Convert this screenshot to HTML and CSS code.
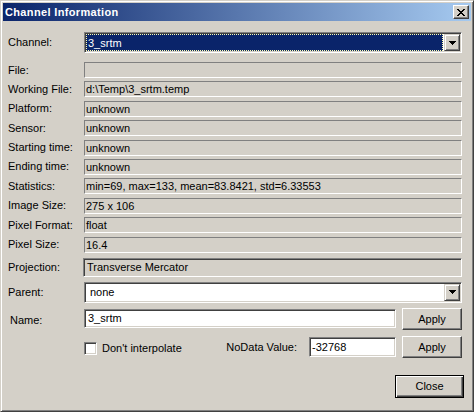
FILE: index.html
```html
<!DOCTYPE html>
<html>
<head>
<meta charset="utf-8">
<title>Channel Information</title>
<link rel="stylesheet" href="styles.css">
</head>
<body>
<div class="window">
  <div class="titlebar">
    <span class="title">Channel Information</span>
    <button class="title-close" aria-label="Close">
      <svg width="8" height="7" viewBox="0 0 8 7"><path d="M0 0h2v1H0zM6 0h2v1H6zM1 1h2v1H1zM5 1h2v1H5zM2 2h4v1H2zM3 3h2v1H3zM2 4h4v1H2zM1 5h2v1H1zM5 5h2v1H5zM0 6h2v1H0zM6 6h2v1H6z" fill="#000"/></svg>
    </button>
  </div>
  <div class="content">
    <div class="row row-combo">
      <span class="label">Channel:</span>
      <div class="combo">
        <div class="combo-value selected"><span>3_srtm</span></div>
        <div class="combo-btn"><svg width="7" height="4" viewBox="0 0 7 4"><path d="M0 0h7v1H0zM1 1h5v1H1zM2 2h3v1H2zM3 3h1v1H3z" fill="#000"/></svg></div>
      </div>
    </div>

    <div class="row row-ro first"><span class="label">File:</span><div class="ro"></div></div>
    <div class="row row-ro"><span class="label">Working File:</span><div class="ro">d:\Temp\3_srtm.temp</div></div>
    <div class="row row-ro"><span class="label">Platform:</span><div class="ro">unknown</div></div>
    <div class="row row-ro"><span class="label">Sensor:</span><div class="ro">unknown</div></div>
    <div class="row row-ro"><span class="label">Starting time:</span><div class="ro">unknown</div></div>
    <div class="row row-ro"><span class="label">Ending time:</span><div class="ro">unknown</div></div>
    <div class="row row-ro"><span class="label">Statistics:</span><div class="ro">min=69, max=133, mean=83.8421, std=6.33553</div></div>
    <div class="row row-ro"><span class="label">Image Size:</span><div class="ro">275 x 106</div></div>
    <div class="row row-ro"><span class="label">Pixel Format:</span><div class="ro">float</div></div>
    <div class="row row-ro"><span class="label">Pixel Size:</span><div class="ro">16.4</div></div>

    <div class="row row-proj"><span class="label">Projection:</span><div class="proj">Transverse Mercator</div></div>

    <div class="row row-parent">
      <span class="label">Parent:</span>
      <div class="combo">
        <div class="combo-value"><span>none</span></div>
        <div class="combo-btn"><svg width="7" height="4" viewBox="0 0 7 4"><path d="M0 0h7v1H0zM1 1h5v1H1zM2 2h3v1H2zM3 3h1v1H3z" fill="#000"/></svg></div>
      </div>
    </div>

    <div class="row row-name">
      <span class="label label-name">Name:</span>
      <div class="line">
        <div class="edit edit-name">3_srtm</div>
        <button class="btn btn-apply">Apply</button>
      </div>
    </div>

    <div class="row row-nodata">
      <span class="label"></span>
      <div class="line">
        <span class="check"></span>
        <span class="check-label">Don't interpolate</span>
        <span class="nodata-label">NoData Value:</span>
        <div class="edit edit-nodata">-32768</div>
        <button class="btn btn-apply">Apply</button>
      </div>
    </div>

    <div class="footer">
      <button class="btn btn-default">Close</button>
    </div>
  </div>
</div>
</body>
</html>
```

FILE: styles.css
```css
* { box-sizing: border-box; }

html, body {
  margin: 0;
  padding: 0;
  background: #d4d0c8;
}

body {
  font-family: "Liberation Sans", Arial, sans-serif;
  font-size: 11px;
  color: #000;
}

.window {
  width: 474px;
  height: 412px;
  background: #d4d0c8;
  border: 1px solid;
  border-color: #d4d0c8 #404040 #404040 #d4d0c8;
  box-shadow: inset 1px 1px #fff, inset -1px -1px #808080;
  padding: 2px;
  display: flex;
  flex-direction: column;
}

.titlebar {
  height: 18px;
  background: linear-gradient(to right, #0a246a, #a6caf0);
  display: flex;
  align-items: center;
  padding-left: 2px;
}

.title {
  color: #fff;
  font-weight: bold;
  font-size: 11px;
  letter-spacing: 0.35px;
  line-height: 18px;
}

.title-close {
  margin-left: auto;
  margin-right: 2px;
  width: 16px;
  height: 14px;
  padding: 0;
  background: #d4d0c8;
  border: 1px solid;
  border-color: #fff #404040 #404040 #fff;
  box-shadow: inset -1px -1px #808080;
  display: flex;
  align-items: center;
  justify-content: center;
}

.title-close svg { display: block; margin-left: -1px; }

.content {
  padding: 11px 9px 0 5px;
  display: flex;
  flex-direction: column;
}

.row {
  display: grid;
  grid-template-columns: 76px 1fr;
  align-items: center;
}

.label { white-space: nowrap; line-height: 13px; }

/* combo boxes */
.row-combo { height: 21px; }
.row-parent { height: 21px; margin-top: 5px; }

.combo {
  height: 21px;
  background: #fff;
  border: 1px solid;
  border-color: #808080 #fff #fff #808080;
  box-shadow: inset 1px 1px #404040, inset -1px -1px #d4d0c8;
  padding: 1px 1px 1px 1px;
  display: flex;
}

.combo-value {
  flex: 1;
  display: flex;
  align-items: center;
  padding-left: 3px;
  margin: 1px 1px 1px 1px;
  height: 15px;
  align-self: center;
}

.combo-value.selected {
  background: #0a246a;
  color: #fff;
  outline: 1px dotted #ffffb0;
  outline-offset: -1px;
  margin: 0 1px 0 0;
  height: 17px;
  padding-left: 2px;
}

.combo-btn {
  width: 16px;
  height: 17px;
  background: #d4d0c8;
  border: 1px solid;
  border-color: #d4d0c8 #404040 #404040 #d4d0c8;
  box-shadow: inset 1px 1px #fff, inset -1px -1px #808080;
  display: flex;
  align-items: center;
  justify-content: center;
}

.combo-btn svg { display: block; }

/* read-only static fields */
.row-ro { height: 16px; margin-top: 3.4px; }
.row-ro.first { margin-top: 9px; }

.ro {
  height: 16px;
  border: 1px solid;
  border-color: #808080 #fff #fff #808080;
  padding-left: 1px;
  line-height: 14px;
  white-space: nowrap;
  overflow: hidden;
}

.row-proj { height: 19px; margin-top: 5.4px; }

.proj {
  height: 19px;
  border: 1px solid;
  border-color: #808080 #fff #fff #808080;
  box-shadow: inset 1px 1px #404040, inset -1px -1px #d4d0c8;
  padding-left: 3px;
  line-height: 17px;
  margin-left: -1px;
}

/* name / nodata rows */
.row-name { height: 22px; margin-top: 5px; }
.row-nodata { height: 22px; margin-top: 6px; }

.label-name { padding-left: 2px; margin-top: 4px; }

.line {
  display: flex;
  align-items: center;
  height: 22px;
}

.edit {
  height: 20px;
  background: #fff;
  border: 1px solid;
  border-color: #808080 #fff #fff #808080;
  box-shadow: inset 1px 1px #404040, inset -1px -1px #d4d0c8;
  padding-left: 3px;
  line-height: 18px;
  white-space: nowrap;
}

.edit-name { flex: 1; height: 19px; line-height: 17px; }
.edit-nodata { width: 87px; padding-left: 2px; }

.btn {
  font-family: "Liberation Sans", Arial, sans-serif;
  font-size: 11px;
  color: #000;
  background: #d4d0c8;
  border: 1px solid;
  border-color: #fff #404040 #404040 #fff;
  box-shadow: inset -1px -1px #808080, inset 1px 1px #d4d0c8;
  padding: 0;
  height: 22px;
}

.btn-apply { width: 60px; margin-left: 6px; }

.check {
  width: 13px;
  height: 13px;
  background: #fff;
  border: 1px solid;
  border-color: #808080 #fff #fff #808080;
  box-shadow: inset 1px 1px #404040, inset -1px -1px #d4d0c8;
  margin-right: 5px;
  margin-top: 3px;
}

.check-label { margin-top: 2px; }

.nodata-label { margin-left: auto; margin-right: 12px; }

.footer {
  display: flex;
  justify-content: flex-end;
  margin-top: 17px;
  margin-right: -2px;
}

.btn-default {
  width: 69px;
  height: 23px;
  border: 1px solid #000;
  box-shadow: inset 1px 1px #fff, inset -1px -1px #404040, inset -2px -2px #808080;
}
```
